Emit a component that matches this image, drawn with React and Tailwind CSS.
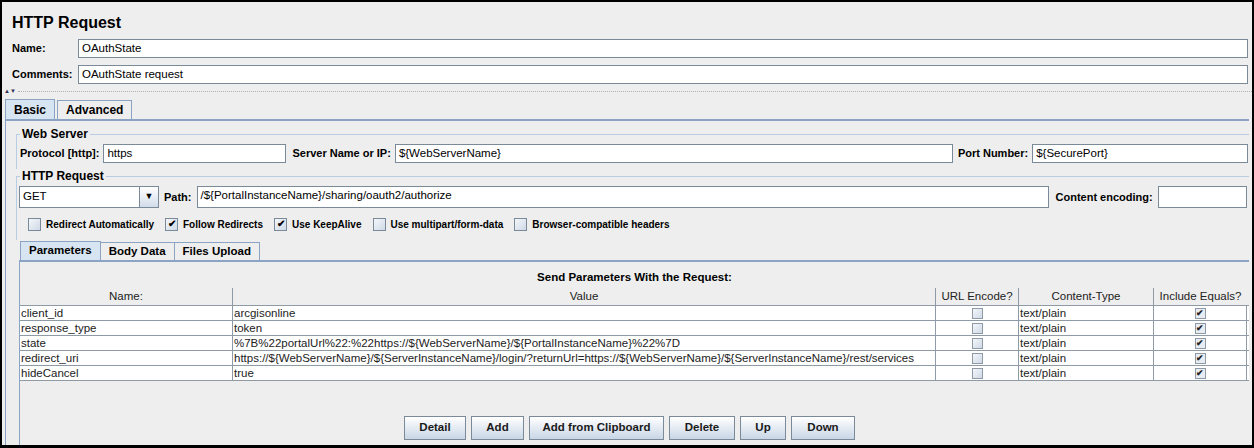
import React from "react";

const F = { fontFamily: '"Liberation Sans", Arial, sans-serif' };

function Input({ value = "", className = "" }) {
  return (
    <div className={"h-[19px] bg-white border border-[#7a8a99] px-[3px] text-[11.5px] leading-[17px] text-black whitespace-nowrap overflow-hidden " + className}>
      {value}
    </div>
  );
}

function Check({ on }) {
  return (
    <div className="w-[13px] h-[13px] border border-[#7a8a99] bg-gradient-to-br from-[#f4f7fb] to-[#cfd9e6] flex items-center justify-center text-[10px] leading-none text-black font-bold">
      {on ? "✔" : ""}
    </div>
  );
}

const rows = [
  ["client_id", "arcgisonline"],
  ["response_type", "token"],
  ["state", "%7B%22portalUrl%22:%22https://${WebServerName}/${PortalInstanceName}%22%7D"],
  ["redirect_uri", "https://${WebServerName}/${ServerInstanceName}/login/?returnUrl=https://${WebServerName}/${ServerInstanceName}/rest/services"],
  ["hideCancel", "true"],
];

const cols = "grid grid-cols-[212px_703px_83px_135px_94px]";

function Btn({ children, w }) {
  return (
    <div className={"h-[24px] border border-[#7a8a99] bg-gradient-to-b from-[#ffffff] to-[#c9d6e6] flex items-center justify-center text-[11.5px] font-bold text-[#1a1a1a] " + w}>
      {children}
    </div>
  );
}

const L = "text-[11px] font-bold whitespace-nowrap";

export default function App() {
  return (
    <div style={F} className="w-[1254px] h-[448px] bg-black p-[2px] pb-[3px] overflow-hidden">
      <div className="w-full h-full bg-[#eeeeee] flex flex-col">
        <div className="pl-[10px] pt-[11px] h-[33px] text-[16px] font-bold leading-[20px]">HTTP Request</div>
        <div className="flex items-center h-[26px] pr-[4px]">
          <div className={"w-[76px] pl-[10px] " + L}>Name:</div>
          <Input value="OAuthState" className="flex-1" />
        </div>
        <div className="flex items-center h-[26px] pr-[4px]">
          <div className={"w-[76px] pl-[10px] " + L}>Comments:</div>
          <Input value="OAuthState request" className="flex-1" />
        </div>
        <div className="h-[8px] flex items-center relative">
          <span className="text-[6px] leading-none text-[#335] pl-[2px]">▲▼</span>
          <div className="flex-1 border-t border-dotted border-[#b0b0b0] ml-[2px]"></div>
        </div>
        <div className="flex items-end h-[22px] pl-[3px] mt-[2px]">
          <div className="h-[20px] px-[8px] bg-[#d7e4f2] border border-b-0 border-[#8ca4c4] text-[12px] font-bold flex items-center">Basic</div>
          <div className="h-[19px] px-[8px] ml-[2px] border border-b-0 border-[#8ca4c4] text-[12px] font-bold flex items-center">Advanced</div>
        </div>
        <div className="flex-1 mx-[3px] border-t-2 border-l border-[#8ca4c4] flex flex-col pt-[13px] pl-[9px]">
          <div className="border-t border-l border-[#b8cde3] ml-[1px] relative">
            <div className="absolute -top-[8px] left-[3px] px-[2px] bg-[#eeeeee] text-[12px] font-bold leading-[14px]">Web Server</div>
            <div className="flex items-center gap-[4px] pt-[9px] pb-[6px] pl-[3px] pr-[1px]">
              <span className={L}>Protocol [http]:</span>
              <Input value="https" className="w-[183px]" />
              <span className={L + " ml-[2px]"}>Server Name or IP:</span>
              <Input value="${WebServerName}" className="w-[558px]" />
              <span className={L + " ml-[1px]"}>Port Number:</span>
              <Input value="${SecurePort}" className="flex-1" />
            </div>
          </div>
          <div className="border-t border-l border-[#b8cde3] ml-[1px] mt-[7px] relative">
            <div className="absolute -top-[8px] left-[3px] px-[2px] bg-[#eeeeee] text-[12px] font-bold leading-[14px]">HTTP Request</div>
            <div className="flex items-center gap-[5px] pt-[9px] pl-[2px] pr-[2px]">
              <div className="w-[140px] h-[22px] border border-[#7a8a99] bg-white flex">
                <div className="flex-1 text-[11.5px] px-[3px] flex items-center">GET</div>
                <div className="w-[19px] border-l border-[#7a8a99] bg-gradient-to-b from-[#fff] to-[#d2dcea] flex items-center justify-center text-[9px]">▼</div>
              </div>
              <span className={L}>Path:</span>
              <Input value="/${PortalInstanceName}/sharing/oauth2/authorize" className="w-[852px] h-[22px]" />
              <span className={L + " ml-[2px]"}>Content encoding:</span>
              <Input value="" className="flex-1 h-[22px]" />
            </div>
            <div className="flex items-center h-[32px] pl-[11px] text-[10px] font-bold">
              <Check /><span className="ml-[5px] mr-[11px]">Redirect Automatically</span>
              <Check on /><span className="ml-[5px] mr-[11px]">Follow Redirects</span>
              <Check on /><span className="ml-[5px] mr-[11px]">Use KeepAlive</span>
              <Check /><span className="ml-[5px] mr-[11px]">Use multipart/form-data</span>
              <Check /><span className="ml-[5px]">Browser-compatible headers</span>
            </div>
          </div>
          <div className="flex items-end h-[20px] pl-[4px] ml-[1px]">
            <div className="h-[19px] px-[8px] bg-[#d7e4f2] border border-b-0 border-[#8ca4c4] text-[11.5px] font-bold flex items-center">Parameters</div>
            <div className="h-[18px] px-[8px] border border-b-0 border-l-0 border-[#8ca4c4] text-[11.5px] font-bold flex items-center">Body Data</div>
            <div className="h-[18px] px-[8px] border border-b-0 border-l-0 border-[#8ca4c4] text-[11.5px] font-bold flex items-center">Files Upload</div>
          </div>
          <div className="flex-1 ml-[4px] border-t-2 border-l border-[#8ca4c4] flex flex-col">
            <div className="text-center text-[11.5px] font-bold h-[26px] pt-[7px]">Send Parameters With the Request:</div>
            <div className="text-[11.5px] text-[#222]">
              <div className={cols + " h-[18px] bg-[#eeeeee] border-b border-[#8e9aa6]"}>
                {["Name:", "Value", "URL Encode?", "Content-Type", "Include Equals?"].map((h, i) => (
                  <div key={h} className={"text-center leading-[17px] whitespace-nowrap " + (i > 0 ? "border-l border-[#8e9aa6]" : "")}>{h}</div>
                ))}
              </div>
              {rows.map(([n, v]) => (
                <div key={n} className={cols + " h-[15px] bg-white border-b border-[#8e9aa6] leading-[14px]"}>
                  <div className="pl-[1px] whitespace-nowrap overflow-hidden">{n}</div>
                  <div className="pl-[1px] border-l border-[#8e9aa6] whitespace-nowrap overflow-hidden">{v}</div>
                  <div className="border-l border-[#8e9aa6] flex justify-center items-center"><div className="w-[11px] h-[11px] border border-[#8e9aa6] bg-gradient-to-br from-[#f4f7fb] to-[#cfd9e6]"></div></div>
                  <div className="pl-[1px] border-l border-[#8e9aa6]">text/plain</div>
                  <div className="border-l border-[#8e9aa6] border-r flex justify-center items-center"><div className="w-[11px] h-[11px] border border-[#8e9aa6] bg-[#e8edf3] text-[9px] leading-[9px] text-center font-bold">✔</div></div>
                </div>
              ))}
            </div>
            <div className="flex-1"></div>
            <div className="flex justify-center gap-[5px] pb-[5px] pr-[10px]">
              <Btn w="w-[62px]">Detail</Btn>
              <Btn w="w-[53px]">Add</Btn>
              <Btn w="w-[135px]">Add from Clipboard</Btn>
              <Btn w="w-[66px]">Delete</Btn>
              <Btn w="w-[46px]">Up</Btn>
              <Btn w="w-[64px]">Down</Btn>
            </div>
          </div>
        </div>
      </div>
    </div>
  );
}
